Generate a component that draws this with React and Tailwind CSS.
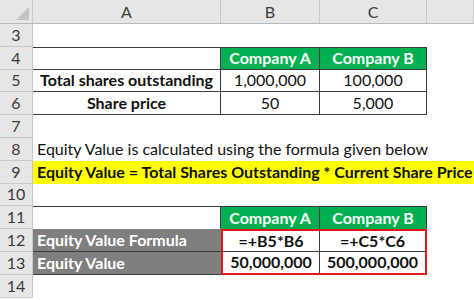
import React from 'react';

const W = { A: 'w-[188px]', B: 'w-[99px]', C: 'w-[107px]', D: 'w-[47px]' };
const line = 'border-[#3c3c3c]';

function Cell({ w, className = '', children }) {
  return (
    <div className={`${w} h-full shrink-0 flex items-center whitespace-nowrap ${className}`}>
      {children}
    </div>
  );
}

function Row({ n, children }) {
  return (
    <div className="flex h-[22.8px]">
      <div className="w-[33px] h-full shrink-0 bg-[#e6e6e6] border-r border-b border-[#c9c9c9] flex items-center justify-center text-[16px] text-[#3a3a3a]">
        {n}
      </div>
      {children}
    </div>
  );
}

export default function App() {
  return (
    <div
      className="w-[474px] h-[300px] overflow-hidden bg-white text-[#111] text-[16px] leading-none"
      style={{ fontFamily: 'Lato, "Liberation Sans", sans-serif' }}
    >
      {/* column headers */}
      <div className="flex h-[24px] bg-[#e6e6e6] border-b border-[#b8b8b8] text-[16px] text-[#3a3a3a]">
        <div className="w-[33px] h-full shrink-0 border-r border-[#c9c9c9] relative">
          <div className="absolute right-[3px] bottom-[3px] w-0 h-0 border-l-[13px] border-l-transparent border-b-[13px] border-b-[#c3c3c3]" />
        </div>
        <div className={`${W.A} shrink-0 border-r border-[#c9c9c9] flex items-center justify-center`}>A</div>
        <div className={`${W.B} shrink-0 border-r border-[#c9c9c9] flex items-center justify-center`}>B</div>
        <div className={`${W.C} shrink-0 border-r border-[#c9c9c9] flex items-center justify-center`}>C</div>
        <div className={`${W.D} shrink-0 border-r border-[#c9c9c9]`} />
      </div>

      <Row n="3" />

      <Row n="4">
        <Cell w={W.A} className={`border-t border-r border-b ${line}`} />
        <Cell w={W.B} className={`border-t border-r border-b ${line} bg-[#00b050] text-white font-bold justify-center`}>Company A</Cell>
        <Cell w={W.C} className={`border-t border-r border-b ${line} bg-[#00b050] text-white font-bold justify-center`}>Company B</Cell>
      </Row>

      <Row n="5">
        <Cell w={W.A} className={`border-r border-b ${line} font-bold justify-center`}>Total shares outstanding</Cell>
        <Cell w={W.B} className={`border-r border-b ${line} justify-center`}>1,000,000</Cell>
        <Cell w={W.C} className={`border-r border-b ${line} justify-center`}>100,000</Cell>
      </Row>

      <Row n="6">
        <Cell w={W.A} className={`border-r border-b ${line} font-bold justify-center`}>Share price</Cell>
        <Cell w={W.B} className={`border-r border-b ${line} justify-center`}>50</Cell>
        <Cell w={W.C} className={`border-r border-b ${line} justify-center`}>5,000</Cell>
      </Row>

      <Row n="7" />

      <Row n="8">
        <div className="pl-[4px] flex items-center whitespace-nowrap">
          Equity Value is calculated using the formula given below
        </div>
      </Row>

      <Row n="9">
        <div className="flex-1 bg-[#ffff00] pl-[4px] flex items-center whitespace-nowrap font-bold">
          Equity Value = Total Shares Outstanding * Current Share Price
        </div>
      </Row>

      <Row n="10" />

      <Row n="11">
        <Cell w={W.A} className={`border-t border-r ${line}`} />
        <Cell w={W.B} className={`border-t border-r ${line} bg-[#00b050] text-white font-bold justify-center`}>Company A</Cell>
        <Cell w={W.C} className={`border-t border-r ${line} bg-[#00b050] text-white font-bold justify-center`}>Company B</Cell>
      </Row>

      <Row n="12">
        <Cell w={W.A} className={`border-b ${line} bg-[#7f7f7f] text-white font-bold pl-[4px]`}>Equity Value Formula</Cell>
        <Cell w={W.B} className={`border-t-2 border-l-2 border-t-[#e8141b] border-l-[#e8141b] border-r border-b ${line} font-bold justify-center`}>=+B5*B6</Cell>
        <Cell w={W.C} className={`border-t-2 border-r-2 border-t-[#e8141b] border-r-[#e8141b] border-b ${line} font-bold justify-center`}>=+C5*C6</Cell>
      </Row>

      <Row n="13">
        <Cell w={W.A} className={`border-b ${line} bg-[#7f7f7f] text-white font-bold pl-[4px]`}>Equity Value</Cell>
        <Cell w={W.B} className={`border-b-2 border-l-2 border-b-[#e8141b] border-l-[#e8141b] border-r ${line} font-bold justify-center`}>50,000,000</Cell>
        <Cell w={W.C} className="border-b-2 border-r-2 border-[#e8141b] font-bold justify-center">500,000,000</Cell>
      </Row>

      <Row n="14" />
    </div>
  );
}
